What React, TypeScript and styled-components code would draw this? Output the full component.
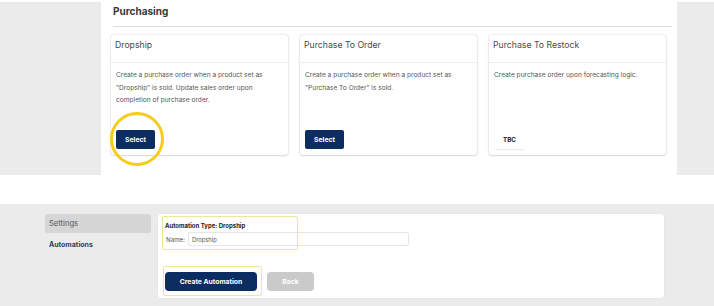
import React from "react";
import styled, { createGlobalStyle } from "styled-components";

const Global = createGlobalStyle`
  html, body { margin: 0; padding: 0; background: #ffffff; }
  body { font-family: Inter, "Open Sans", Arial, sans-serif; }
  * { box-sizing: border-box; }
`;

const Page = styled.div`
  width: 714px;
  height: 306px;
  display: flex;
  flex-direction: column;
  overflow: hidden;
`;

const TopSection = styled.div`
  margin-top: 2px;
  height: 173px;
  display: flex;
`;

const SideGray = styled.div<{ $w: number }>`
  width: ${(p) => p.$w}px;
  background: #ebebeb;
  flex-shrink: 0;
`;

const Content = styled.div`
  flex: 1;
  background: #fff;
  margin-top: -2px;
  padding: 4px 5px 0 10px;
  position: relative;
`;

const SectionTitle = styled.div`
  font-size: 10px;
  font-weight: 700;
  color: #383838;
  padding-left: 2px;
  height: 15px;
  line-height: 15px;
`;

const Divider = styled.div`
  height: 1px;
  background: #dcdcdc;
  margin: 7px 0 8px 2px;
`;

const Cards = styled.div`
  display: flex;
  gap: 12px;
`;

const Card = styled.div`
  width: 177px;
  height: 120px;
  background: #fff;
  border-radius: 3px;
  box-shadow: 0 0 2px rgba(0, 0, 0, 0.22), 0 1px 2px rgba(0, 0, 0, 0.1);
  display: flex;
  flex-direction: column;
`;

const CardHeader = styled.div`
  height: 28px;
  border-bottom: 1px solid #ececec;
  padding: 5px 0 0 4px;
  font-size: 8.7px;
  color: #4a4a4a;
`;

const CardBody = styled.div`
  flex: 1;
  padding: 6px 5px 6px 5px;
  display: flex;
  flex-direction: column;
  justify-content: space-between;
`;

const Desc = styled.p`
  margin: 0;
  font-size: 6.6px;
  line-height: 12.6px;
  color: #555;
`;

const SelectButton = styled.button`
  width: 39px;
  height: 19px;
  border: none;
  border-radius: 2px;
  background: #0c2d62;
  color: #fff;
  font-family: inherit;
  font-size: 6.8px;
  font-weight: 700;
  padding: 0;
`;

const TbcTag = styled.div`
  width: 31px;
  height: 19px;
  border-radius: 2px;
  box-shadow: 0 1px 1px rgba(0, 0, 0, 0.08);
  font-size: 6.3px;
  font-weight: 700;
  color: #222;
  display: flex;
  align-items: center;
  justify-content: center;
`;

const Circle = styled.svg`
  position: absolute;
  left: 8px;
  top: 111px;
  pointer-events: none;
`;

const Gap = styled.div`
  height: 29px;
  background: #fff;
`;

const BottomSection = styled.div`
  flex: 1;
  background: #ebebeb;
  display: flex;
  gap: 7px;
  padding: 10px 0 0 45px;
`;

const Sidebar = styled.div`
  width: 106px;
  display: flex;
  flex-direction: column;
  gap: 2px;
`;

const NavItem = styled.div<{ $active?: boolean }>`
  height: 19px;
  border-radius: 3px;
  background: ${(p) => (p.$active ? "#d6d6d6" : "transparent")};
  color: ${(p) => (p.$active ? "#555" : "#2b3f63")};
  font-weight: ${(p) => (p.$active ? 400 : 700)};
  font-size: ${(p) => (p.$active ? 7.6 : 7)}px;
  padding-left: 4px;
  display: flex;
  align-items: center;
`;

const Panel = styled.div`
  width: 506px;
  height: 84px;
  background: #fff;
  border-radius: 3px;
  box-shadow: 0 0 1px rgba(0, 0, 0, 0.15);
  position: relative;
  padding: 8px 0 0 7px;
`;

const TypeLabel = styled.div`
  font-size: 6px;
  font-weight: 700;
  color: #222;
  height: 8px;
  line-height: 8px;
`;

const NameRow = styled.div`
  margin-top: 2px;
  display: flex;
  align-items: center;
  gap: 3px;
  padding-left: 1px;
`;

const NameLabel = styled.span`
  font-size: 6.2px;
  color: #555;
`;

const NameInput = styled.div`
  width: 221px;
  height: 14px;
  border: 1px solid #e6e6e6;
  border-radius: 2px;
  font-size: 5.8px;
  color: #555;
  padding-left: 3px;
  display: flex;
  align-items: center;
`;

const Actions = styled.div`
  margin-top: 26px;
  display: flex;
  gap: 10px;
`;

const PrimaryButton = styled.button`
  width: 92px;
  height: 19px;
  border: none;
  border-radius: 4px;
  background: #0c2d62;
  color: #fff;
  font-family: inherit;
  font-size: 6.8px;
  font-weight: 700;
  padding: 0;
`;

const BackButton = styled.button`
  width: 47px;
  height: 19px;
  border: none;
  border-radius: 4px;
  background: #cacaca;
  color: #fff;
  font-family: inherit;
  font-size: 6.8px;
  font-weight: 700;
  padding: 0;
`;

const Highlight = styled.div<{ $l: number; $t: number; $w: number; $h: number }>`
  position: absolute;
  left: ${(p) => p.$l}px;
  top: ${(p) => p.$t}px;
  width: ${(p) => p.$w}px;
  height: ${(p) => p.$h}px;
  border: 1px solid #ece79a;
  border-radius: 2px;
  pointer-events: none;
`;

const cards = [
  {
    title: "Dropship",
    desc: (
      <>
        Create a purchase order when a product set as
        <br />
        "Dropship" is sold. Update sales order upon
        <br />
        completion of purchase order.
      </>
    ),
    action: "select",
  },
  {
    title: "Purchase To Order",
    desc: (
      <>
        Create a purchase order when a product set as
        <br />
        "Purchase To Order" is sold.
      </>
    ),
    action: "select",
  },
  {
    title: "Purchase To Restock",
    desc: <>Create purchase order upon forecasting logic.</>,
    action: "tbc",
  },
];

export default function App() {
  return (
    <Page>
      <Global />
      <TopSection>
        <SideGray $w={101} />
        <Content>
          <SectionTitle>Purchasing</SectionTitle>
          <Divider />
          <Cards>
            {cards.map((c) => (
              <Card key={c.title}>
                <CardHeader>{c.title}</CardHeader>
                <CardBody>
                  <Desc>{c.desc}</Desc>
                  {c.action === "select" ? (
                    <SelectButton>Select</SelectButton>
                  ) : (
                    <TbcTag>TBC</TbcTag>
                  )}
                </CardBody>
              </Card>
            ))}
          </Cards>
          <Circle width="56" height="56" viewBox="0 0 56 56">
            <circle cx="28" cy="28" r="25.5" fill="none" stroke="#f6cb1c" strokeWidth="3" />
          </Circle>
        </Content>
        <SideGray $w={37} />
      </TopSection>
      <Gap />
      <BottomSection>
        <Sidebar>
          <NavItem $active>Settings</NavItem>
          <NavItem>Automations</NavItem>
        </Sidebar>
        <Panel>
          <TypeLabel>Automation Type: Dropship</TypeLabel>
          <NameRow>
            <NameLabel>Name:</NameLabel>
            <NameInput>Dropship</NameInput>
          </NameRow>
          <Actions>
            <PrimaryButton>Create Automation</PrimaryButton>
            <BackButton>Back</BackButton>
          </Actions>
          <Highlight $l={4} $t={2} $w={136} $h={34} />
          <Highlight $l={5} $t={52} $w={99} $h={30} />
        </Panel>
      </BottomSection>
    </Page>
  );
}
